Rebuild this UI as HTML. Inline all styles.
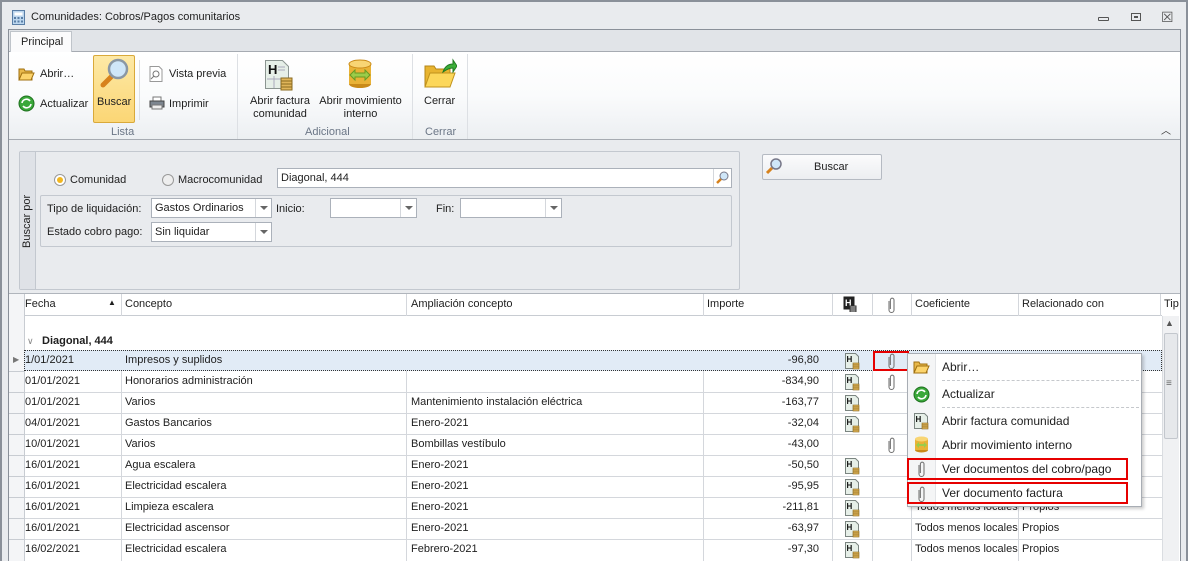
<!DOCTYPE html>
<html><head><meta charset="utf-8"><style>
*{box-sizing:border-box;margin:0;padding:0}
body{width:1188px;height:561px;overflow:hidden;background:#e9ebee;font-family:"Liberation Sans",sans-serif;font-size:11px;color:#1e1e1e;position:relative}
.a{position:absolute}
.t{position:absolute;white-space:nowrap}
.vl{position:absolute;width:1px;background:#d4d7dc}
.combo{position:absolute;background:#fff;border:1px solid #abb1ba;height:20px}
.combo .dd{position:absolute;right:0;top:0;width:16px;height:18px;border-left:1px solid #d4d7dc}
.combo .dd:after{content:"";position:absolute;left:4px;top:7px;border:4px solid transparent;border-top:4px solid #666}
.rb{position:absolute;border:2px solid #e60000}
</style></head><body>
<div class="a" style="left:0;top:0;width:1188px;height:2px;background:#8a9099"></div>
<div class="a" style="left:1186px;top:0;width:2px;height:561px;background:#8a9099"></div>
<div class="a" style="left:0;top:0;width:2px;height:561px;background:#8a9099"></div>
<svg class="a" style="left:12px;top:10px" width="13" height="15"><rect x=".5" y=".5" width="12" height="14" fill="#bcd6ee" stroke="#5a7ea6"/><rect x="2.5" y="2.5" width="8" height="3" fill="#fff"/><g fill="#5a7ea6"><rect x="2" y="7" width="2" height="2"/><rect x="5.5" y="7" width="2" height="2"/><rect x="9" y="7" width="2" height="2"/><rect x="2" y="10.5" width="2" height="2"/><rect x="5.5" y="10.5" width="2" height="2"/><rect x="9" y="10.5" width="2" height="2"/></g></svg>
<div class="t" style="left:31px;top:11px">Comunidades: Cobros/Pagos comunitarios</div>
<div class="a" style="left:1098px;top:17px;width:11px;height:4px;border:1px solid #555;border-radius:1px"></div>
<div class="a" style="left:1131px;top:13px;width:10px;height:8px;border:1px solid #555"><div class="a" style="left:2px;top:2px;width:4px;height:2px;border:1px solid #555"></div></div>
<div class="t" style="left:1161px;top:9px;font-size:14px;color:#555">☒</div>
<div class="a" style="left:8px;top:29px;width:1173px;height:532px;border:1px solid #8a9099;background:#e9ebee"></div>
<div class="a" style="left:9px;top:30px;width:1171px;height:22px;background:#e1e4e8;border-bottom:1px solid #a6abb2"></div>
<div class="a" style="left:10px;top:31px;width:62px;height:22px;background:#fbfbfc;border:1px solid #bfc4ca;border-bottom:none"></div>
<div class="t" style="left:21px;top:36px">Principal</div>
<div class="a" style="left:9px;top:52px;width:1171px;height:88px;background:linear-gradient(#fff,#fafbfc 50%,#eceff2);border-bottom:1px solid #a6abb2"></div>
<div class="a" style="left:237px;top:54px;width:1px;height:85px;background:#dde0e4"></div>
<div class="a" style="left:412px;top:54px;width:1px;height:85px;background:#dde0e4"></div>
<div class="a" style="left:467px;top:54px;width:1px;height:85px;background:#dde0e4"></div>
<div class="a" style="left:139px;top:60px;width:1px;height:60px;background:#dde0e4"></div>
<svg class="a" style="left:18px;top:67px" width="17" height="14"><path d="M1 2h5l1 2h7v9H1z" fill="#e8b84a" stroke="#a07010"/><path d="M1 13l3-7h12l-3 7z" fill="#fcd46c" stroke="#a07010"/></svg>
<div class="t" style="left:40px;top:68px">Abrir…</div>
<svg class="a" style="left:18px;top:95px" width="17" height="17"><circle cx="8.5" cy="8.5" r="7.5" fill="#3aa83a" stroke="#1d6f1d"/><path d="M4 8a4.5 4.5 0 0 1 8-2M13 9a4.5 4.5 0 0 1-8 2" stroke="#fff" stroke-width="1.6" fill="none"/></svg>
<div class="t" style="left:40px;top:98px">Actualizar</div>
<div class="a" style="left:93px;top:55px;width:42px;height:68px;background:linear-gradient(#fde9a6,#fbd675);border:1px solid #d9a93a;border-radius:2px"></div>
<svg class="a" style="left:97px;top:57px" width="34" height="34"><line x1="6" y1="28" x2="14" y2="20" stroke="#d7821c" stroke-width="5" stroke-linecap="round"/><circle cx="21" cy="12" r="9" fill="#cfe6f8" stroke="#8a97a4" stroke-width="2.5"/></svg>
<div class="t" style="left:97px;top:96px">Buscar</div>
<svg class="a" style="left:149px;top:66px" width="14" height="16"><path d="M1 .5h9l3 3v12H1z" fill="#fff" stroke="#999"/><circle cx="7" cy="8" r="3" fill="none" stroke="#777"/><line x1="5" y1="10" x2="2" y2="13" stroke="#777"/></svg>
<div class="t" style="left:169px;top:68px">Vista previa</div>
<svg class="a" style="left:149px;top:96px" width="16" height="14"><rect x="4" y="1" width="8" height="5" fill="#fff" stroke="#777"/><rect x="1" y="5" width="14" height="6" fill="#7d8690" stroke="#444"/><rect x="3" y="9" width="10" height="4" fill="#eee" stroke="#777"/></svg>
<div class="t" style="left:169px;top:98px">Imprimir</div>
<div class="t" style="left:111px;top:126px;color:#6b7686">Lista</div>
<svg class="a" style="left:264px;top:59px" width="30" height="32"><path d="M1.5 1.5h17l6 6v22h-23z" fill="#e6efe8" stroke="#8b9591"/><text x="4" y="15" font-family="Liberation Sans" font-weight="bold" font-size="13" fill="#111">H</text><g stroke="#aab"><line x1="14" y1="8" x2="21" y2="8"/><line x1="14" y1="11" x2="21" y2="11"/><line x1="3" y1="20" x2="20" y2="20"/><line x1="10" y1="17" x2="10" y2="29"/></g><g fill="#e0b55a" stroke="#8a6a20"><rect x="17" y="19" width="11" height="3"/><rect x="17" y="22" width="11" height="3"/><rect x="17" y="25" width="11" height="3"/><rect x="17" y="28" width="11" height="3"/></g></svg>
<div class="t" style="left:249px;top:95px;line-height:13px;text-align:center;width:62px">Abrir factura<br>comunidad</div>
<svg class="a" style="left:347px;top:59px" width="26" height="30"><ellipse cx="13" cy="25" rx="11" ry="4" fill="#c98a18"/><rect x="2" y="5" width="22" height="20" fill="#e9b236"/><ellipse cx="13" cy="5" rx="11" ry="4" fill="#f8d574" stroke="#c98a18"/><path d="M3 16l5-5v3h10v-3l5 5-5 5v-3H8v3z" fill="#9bcc4a" stroke="#6a9a20"/></svg>
<div class="t" style="left:319px;top:95px;line-height:13px;text-align:center;width:83px">Abrir movimiento<br>interno</div>
<div class="t" style="left:305px;top:126px;color:#6b7686">Adicional</div>
<svg class="a" style="left:423px;top:58px" width="34" height="32"><path d="M2 8h9l2 3h14v18H2z" fill="#e8b430" stroke="#b48618"/><path d="M2 29l5-14h25l-5 14z" fill="#fcd75a" stroke="#c0921c"/><path d="M20 14c2-6 6-8 10-8v-4l4 6-4 6v-4c-3 0-6 1-10 4z" fill="#3cae3a" stroke="#207a20"/></svg>
<div class="t" style="left:424px;top:95px">Cerrar</div>
<div class="t" style="left:425px;top:126px;color:#6b7686">Cerrar</div>
<div class="t" style="left:1161px;top:122px;font-size:10px;color:#333">︿</div>
<div class="a" style="left:19px;top:151px;width:721px;height:139px;border:1px solid #c3c8cf;border-radius:2px"></div>
<div class="a" style="left:20px;top:152px;width:16px;height:137px;background:#dfe2e7;border-right:1px solid #c3c8cf"></div>
<div class="t" style="left:21px;top:248px;transform:rotate(-90deg);transform-origin:0 0">Buscar por</div>
<div class="a" style="left:54px;top:174px;width:12px;height:12px;border-radius:50%;background:#fff;border:1px solid #999"><div class="a" style="left:2px;top:2px;width:6px;height:6px;border-radius:50%;background:#f2b61f"></div></div>
<div class="t" style="left:70px;top:174px">Comunidad</div>
<div class="a" style="left:162px;top:174px;width:12px;height:12px;border-radius:50%;background:#eee;border:1px solid #999"></div>
<div class="t" style="left:178px;top:174px">Macrocomunidad</div>
<div class="a" style="left:277px;top:168px;width:455px;height:20px;background:#fff;border:1px solid #abb1ba"></div>
<div class="t" style="left:281px;top:172px">Diagonal, 444</div>
<div class="a" style="left:713px;top:169px;width:18px;height:18px;border-left:1px solid #d4d7dc"></div>
<svg class="a" style="left:715px;top:171px" width="14" height="14"><line x1="2" y1="12" x2="6" y2="8" stroke="#d7821c" stroke-width="2.5"/><circle cx="9" cy="5" r="4" fill="#cfe6f8" stroke="#778"/></svg>
<div class="a" style="left:40px;top:195px;width:692px;height:52px;border:1px solid #c3c8cf;border-radius:2px"></div>
<div class="t" style="left:47px;top:203px">Tipo de liquidación:</div>
<div class="combo" style="left:151px;top:198px;width:121px"><div class="t" style="left:3px;top:3px">Gastos Ordinarios</div><div class="dd"></div></div>
<div class="t" style="left:276px;top:203px">Inicio:</div>
<div class="combo" style="left:330px;top:198px;width:87px"><div class="dd"></div></div>
<div class="t" style="left:436px;top:203px">Fin:</div>
<div class="combo" style="left:460px;top:198px;width:102px"><div class="dd"></div></div>
<div class="t" style="left:47px;top:226px">Estado cobro pago:</div>
<div class="combo" style="left:151px;top:222px;width:121px"><div class="t" style="left:3px;top:3px">Sin liquidar</div><div class="dd"></div></div>
<div class="a" style="left:762px;top:154px;width:120px;height:26px;background:linear-gradient(#fbfbfc,#eceef1);border:1px solid #b5bac2;border-radius:2px"></div>
<svg class="a" style="left:765px;top:157px" width="18" height="18"><line x1="2" y1="16" x2="7" y2="11" stroke="#d7821c" stroke-width="3"/><circle cx="11" cy="7" r="5" fill="#cfe6f8" stroke="#778" stroke-width="1.5"/></svg>
<div class="t" style="left:814px;top:161px">Buscar</div>
<!-- grid -->
<div class="a" style="left:9px;top:293px;width:1171px;height:268px;background:#fff;border-top:1px solid #b0b5bc"></div>
<div class="a" style="left:9px;top:294px;width:1153px;height:22px;background:#fff;border-bottom:1px solid #c8ccd2"></div>
<div class="a" style="left:9px;top:294px;width:16px;height:267px;background:#f4f5f7;border-right:1px solid #c8ccd2"></div>
<div class="t" style="left:25px;top:298px">Fecha</div>
<div class="t" style="left:108px;top:298px;font-size:8px">▲</div>
<div class="t" style="left:125px;top:298px">Concepto</div>
<div class="t" style="left:411px;top:298px">Ampliación concepto</div>
<div class="t" style="left:707px;top:298px">Importe</div>
<div class="t" style="left:915px;top:298px">Coeficiente</div>
<div class="t" style="left:1022px;top:298px">Relacionado con</div>
<div class="t" style="left:1164px;top:298px">Tip</div>
<svg class="a" style="left:843px;top:296px" width="14" height="16"><rect x=".5" y=".5" width="11" height="13" fill="#222"/><text x="2" y="10" font-size="9" font-weight="bold" fill="#fff" font-family="Liberation Sans">H</text><g fill="#ccc" stroke="#333"><rect x="7" y="10" width="6" height="2"/><rect x="7" y="12" width="6" height="2"/><rect x="7" y="14" width="6" height="2"/></g></svg>
<svg width="0" height="0" style="position:absolute"><defs><g id="hi"><path d="M.5 .5h10l3 3v12H.5z" fill="#e6efe8" stroke="#7b8581"/><text x="1.5" y="9" font-size="8" font-weight="bold" fill="#111" font-family="Liberation Sans">H</text><g fill="#e0b55a" stroke="#8a6a20" stroke-width=".6"><rect x="8" y="10" width="6" height="2"/><rect x="8" y="12" width="6" height="2"/><rect x="8" y="14" width="6" height="2"/></g></g><g id="cl"><path d="M3 4v9a2.5 2.5 0 0 0 5 0V3a1.8 1.8 0 0 0-3.6 0v9" fill="none" stroke="#777" stroke-width="1.1"/></g></defs></svg>
<svg class="a" style="left:886px;top:297px" width="11" height="16"><use href="#cl"/></svg>
<!-- header vlines -->
<div class="vl" style="left:121px;top:294px;height:22px"></div>
<div class="vl" style="left:406px;top:294px;height:22px"></div>
<div class="vl" style="left:703px;top:294px;height:22px"></div>
<div class="vl" style="left:832px;top:294px;height:22px"></div>
<div class="vl" style="left:872px;top:294px;height:22px"></div>
<div class="vl" style="left:911px;top:294px;height:22px"></div>
<div class="vl" style="left:1018px;top:294px;height:22px"></div>
<div class="vl" style="left:1160px;top:294px;height:22px"></div>
<!-- body vlines -->
<div class="vl" style="left:121px;top:371px;height:190px"></div>
<div class="vl" style="left:406px;top:371px;height:190px"></div>
<div class="vl" style="left:703px;top:371px;height:190px"></div>
<div class="vl" style="left:832px;top:371px;height:190px"></div>
<div class="vl" style="left:872px;top:371px;height:190px"></div>
<div class="vl" style="left:911px;top:371px;height:190px"></div>
<div class="vl" style="left:1018px;top:371px;height:190px"></div>
<div class="t" style="left:27px;top:336px;font-size:9px;color:#888">∨</div>
<div class="t" style="left:42px;top:335px;font-weight:bold">Diagonal, 444</div>
<div class="a" style="left:24px;top:350px;width:1138px;height:21px;background:#e1ebf6;border:1px dotted #333"></div>
<div class="t" style="left:13px;top:355px;font-size:8px;color:#777">▶</div>
<div class="a" style="left:25px;top:392px;width:1137px;height:1px;background:#d4d7dc;box-shadow:0 21px #d4d7dc,0 42px #d4d7dc,0 63px #d4d7dc,0 84px #d4d7dc,0 105px #d4d7dc,0 126px #d4d7dc,0 147px #d4d7dc"></div>
<div class="a" style="left:9px;top:371px;width:16px;height:1px;background:#c8ccd2;box-shadow:0 21px #c8ccd2,0 42px #c8ccd2,0 63px #c8ccd2,0 84px #c8ccd2,0 105px #c8ccd2,0 126px #c8ccd2,0 147px #c8ccd2,0 168px #c8ccd2"></div>
<div class="a" style="left:25px;top:350px;width:1137px;height:210px">
<div class="t" style="left:0;top:4px">1/01/2021</div><div class="t" style="left:100px;top:4px">Impresos y suplidos</div><div class="t" style="right:343px;top:4px">-96,80</div>
<div class="t" style="left:0;top:25px">01/01/2021</div><div class="t" style="left:100px;top:25px">Honorarios administración</div><div class="t" style="right:343px;top:25px">-834,90</div>
<div class="t" style="left:0;top:46px">01/01/2021</div><div class="t" style="left:100px;top:46px">Varios</div><div class="t" style="left:386px;top:46px">Mantenimiento instalación eléctrica</div><div class="t" style="right:343px;top:46px">-163,77</div>
<div class="t" style="left:0;top:67px">04/01/2021</div><div class="t" style="left:100px;top:67px">Gastos Bancarios</div><div class="t" style="left:386px;top:67px">Enero-2021</div><div class="t" style="right:343px;top:67px">-32,04</div>
<div class="t" style="left:0;top:88px">10/01/2021</div><div class="t" style="left:100px;top:88px">Varios</div><div class="t" style="left:386px;top:88px">Bombillas vestíbulo</div><div class="t" style="right:343px;top:88px">-43,00</div>
<div class="t" style="left:0;top:109px">16/01/2021</div><div class="t" style="left:100px;top:109px">Agua escalera</div><div class="t" style="left:386px;top:109px">Enero-2021</div><div class="t" style="right:343px;top:109px">-50,50</div>
<div class="t" style="left:0;top:130px">16/01/2021</div><div class="t" style="left:100px;top:130px">Electricidad escalera</div><div class="t" style="left:386px;top:130px">Enero-2021</div><div class="t" style="right:343px;top:130px">-95,95</div>
<div class="t" style="left:0;top:151px">16/01/2021</div><div class="t" style="left:100px;top:151px">Limpieza escalera</div><div class="t" style="left:386px;top:151px">Enero-2021</div><div class="t" style="right:343px;top:151px">-211,81</div><div class="t" style="left:890px;top:151px">Todos menos locales</div><div class="t" style="left:997px;top:151px">Propios</div>
<div class="t" style="left:0;top:172px">16/01/2021</div><div class="t" style="left:100px;top:172px">Electricidad ascensor</div><div class="t" style="left:386px;top:172px">Enero-2021</div><div class="t" style="right:343px;top:172px">-63,97</div><div class="t" style="left:890px;top:172px">Todos menos locales</div><div class="t" style="left:997px;top:172px">Propios</div>
<div class="t" style="left:0;top:193px">16/02/2021</div><div class="t" style="left:100px;top:193px">Electricidad escalera</div><div class="t" style="left:386px;top:193px">Febrero-2021</div><div class="t" style="right:343px;top:193px">-97,30</div><div class="t" style="left:890px;top:193px">Todos menos locales</div><div class="t" style="left:997px;top:193px">Propios</div>
</div>
<svg class="a" style="left:845px;top:353px" width="15" height="17"><use href="#hi"/></svg>
<svg class="a" style="left:845px;top:374px" width="15" height="17"><use href="#hi"/></svg>
<svg class="a" style="left:845px;top:395px" width="15" height="17"><use href="#hi"/></svg>
<svg class="a" style="left:845px;top:416px" width="15" height="17"><use href="#hi"/></svg>
<svg class="a" style="left:845px;top:458px" width="15" height="17"><use href="#hi"/></svg>
<svg class="a" style="left:845px;top:479px" width="15" height="17"><use href="#hi"/></svg>
<svg class="a" style="left:845px;top:500px" width="15" height="17"><use href="#hi"/></svg>
<svg class="a" style="left:845px;top:521px" width="15" height="17"><use href="#hi"/></svg>
<svg class="a" style="left:845px;top:542px" width="15" height="17"><use href="#hi"/></svg>
<svg class="a" style="left:886px;top:353px" width="11" height="16"><use href="#cl"/></svg>
<svg class="a" style="left:886px;top:374px" width="11" height="16"><use href="#cl"/></svg>
<svg class="a" style="left:886px;top:437px" width="11" height="16"><use href="#cl"/></svg>
<div class="rb" style="left:873px;top:351px;width:36px;height:20px"></div>
<div class="a" style="left:1162px;top:316px;width:17px;height:245px;background:#f0f1f3;border-left:1px solid #dadde1"></div>
<div class="t" style="left:1165px;top:318px;font-size:9px;color:#555">▲</div>
<div class="a" style="left:1164px;top:333px;width:14px;height:106px;background:#e6e8eb;border:1px solid #c3c7cd;border-radius:2px"></div>
<div class="t" style="left:1166px;top:378px;font-size:10px;color:#666">≡</div>
<div class="a" style="left:907px;top:353px;width:235px;height:154px;background:#fff;border:1px solid #a8adb4;box-shadow:2px 2px 3px rgba(0,0,0,.2)"></div>
<div class="a" style="left:908px;top:354px;width:28px;height:152px;background:#f4f5f6;border-right:1px solid #e2e4e7"></div>
<div class="a" style="left:942px;top:380px;width:197px;border-top:1px dashed #c5c8cc"></div>
<div class="a" style="left:942px;top:407px;width:197px;border-top:1px dashed #c5c8cc"></div>
<svg class="a" style="left:913px;top:360px" width="17" height="14"><path d="M1 2h5l1 2h7v9H1z" fill="#e8b84a" stroke="#a07010"/><path d="M1 13l3-7h12l-3 7z" fill="#fcd46c" stroke="#a07010"/></svg>
<div class="t" style="left:942px;top:360px;font-size:12px">Abrir…</div>
<svg class="a" style="left:913px;top:386px" width="17" height="17"><circle cx="8.5" cy="8.5" r="7.5" fill="#3aa83a" stroke="#1d6f1d"/><path d="M4 8a4.5 4.5 0 0 1 8-2M13 9a4.5 4.5 0 0 1-8 2" stroke="#fff" stroke-width="1.6" fill="none"/></svg>
<div class="t" style="left:942px;top:387px;font-size:12px">Actualizar</div>
<svg class="a" style="left:914px;top:413px" width="15" height="17"><use href="#hi"/></svg>
<div class="t" style="left:942px;top:414px;font-size:12px">Abrir factura comunidad</div>
<svg class="a" style="left:914px;top:436px" width="15" height="17"><ellipse cx="7.5" cy="14" rx="6.5" ry="2.5" fill="#c98a18"/><rect x="1" y="3" width="13" height="11" fill="#e9b236"/><ellipse cx="7.5" cy="3" rx="6.5" ry="2.5" fill="#f8d574"/><path d="M2 9l3-3v2h5V6l3 3-3 3v-2H5v2z" fill="#9bcc4a"/></svg>
<div class="t" style="left:942px;top:438px;font-size:12px">Abrir movimiento interno</div>
<svg class="a" style="left:916px;top:461px" width="11" height="16"><use href="#cl"/></svg>
<div class="t" style="left:942px;top:462px;font-size:12px">Ver documentos del cobro/pago</div>
<svg class="a" style="left:916px;top:486px" width="11" height="16"><use href="#cl"/></svg>
<div class="t" style="left:942px;top:486px;font-size:12px">Ver documento factura</div>
<div class="rb" style="left:907px;top:458px;width:221px;height:22px"></div>
<div class="rb" style="left:907px;top:482px;width:221px;height:22px"></div>
</body></html>
